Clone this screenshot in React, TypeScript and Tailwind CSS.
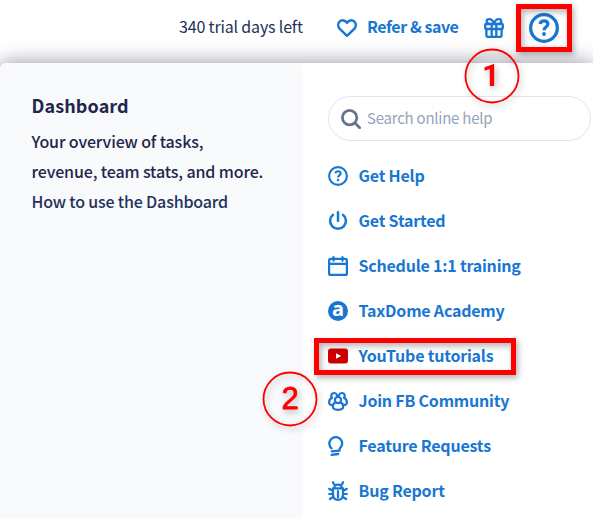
import React from "react";

const font = "font-['Noto_Sans_CJK_SC','Noto_Sans',sans-serif]";

function Svg({ children, size = 20, sw = 2.2 }: { children: React.ReactNode; size?: number; sw?: number }) {
  return (
    <svg className="shrink-0" width={size} height={size} viewBox="0 0 20 20" fill="none" stroke="currentColor" strokeWidth={sw} strokeLinecap="round" strokeLinejoin="round">
      {children}
    </svg>
  );
}

const Question = ({ size = 20, sw = 2.1 }: { size?: number; sw?: number }) => (
  <Svg size={size} sw={sw}>
    <circle cx="10" cy="10" r="8.9" />
    <path d="M7.4 7.4C7.6 6 8.6 5.3 10.1 5.3c1.5 0 2.5.9 2.5 2.1 0 1.9-2.6 2-2.6 4.1" strokeLinecap="butt" />
    <circle cx="10" cy="14" r="1.3" fill="currentColor" stroke="none" />
  </Svg>
);

const Heart = () => (
  <Svg sw={2.5}>
    <path d="M10 17.8 2.8 10.8C.8 8.7.7 5.6 2.6 3.7 4.7 1.6 8 2 10 4.7c2-2.7 5.3-3.1 7.4-1 1.9 1.9 1.8 5-.2 7.1Z" />
  </Svg>
);

const Gift = () => (
  <Svg sw={2.3}>
    <rect x="1.2" y="6" width="17.6" height="5" rx="1" />
    <path d="M2.4 11v6.2c0 .9.6 1.6 1.5 1.6h12.2c.9 0 1.5-.7 1.5-1.6V11M7.7 6v12.8M12.3 6v12.8M10 5.4C8.8 2.5 7.2 1.2 5.4 1.2S2.7 2.1 2.7 3.3c0 1.5 1 2.6 2.6 2.6M10 5.4c1.2-2.9 2.8-4.2 4.6-4.2s2.7.9 2.7 2.1c0 1.5-1 2.6-2.6 2.6" />
  </Svg>
);

const Power = () => (
  <Svg sw={2.5}>
    <path d="M10 1.2v8.6M4.9 3.9a7.9 7.9 0 1 0 10.2 0" />
  </Svg>
);

const Calendar = () => (
  <Svg sw={2.2}>
    <rect x="1.1" y="2.9" width="17.8" height="16" rx="1.5" />
    <path d="M1 7.8h18M5.5 1.1v3.6M14.5 1.1v3.6" />
  </Svg>
);

const Academy = () => (
  <span className="flex size-5 shrink-0 items-center justify-center rounded-full bg-[#1976d2] font-['Noto_Sans',sans-serif] text-[20px] leading-none font-bold text-white">
    <span className="-mt-[4px]">a</span>
  </span>
);

const YouTube = () => (
  <svg className="shrink-0" width="20" height="20" viewBox="0 0 20 20">
    <rect y="2.5" width="20" height="15" rx="3" fill="#cc0000" />
    <path d="m8 7.2 5.2 2.8L8 12.8Z" fill="#fff" />
  </svg>
);

const Community = () => (
  <Svg sw={2.2}>
    <circle cx="10" cy="9" r="3.1" />
    <path d="M7.3 11.4c-1.5.7-2.5 2.3-2.5 4.1 0 4.4 10.4 4.4 10.4 0 0-1.8-1-3.4-2.5-4.1" />
    <path d="M9 4.6A2.9 2.9 0 1 0 3.9 6.8M11 4.6a2.9 2.9 0 1 1 5.1 2.2" />
    <path d="M3.9 6.8C2.1 7.7 1.1 9.4 1.1 11.4c0 2 1.5 2.9 3.9 2.5M16.1 6.8c1.8.9 2.8 2.6 2.8 4.6 0 2-1.5 2.9-3.9 2.5" />
  </Svg>
);

const Bulb = () => (
  <Svg sw={2.3}>
    <path d="M3.5 12.3A6.4 6.4 0 1 1 11.6 12.6V14.6L3.8 15.4M3.6 18.8l6.6-.8" />
  </Svg>
);

const Bug = () => (
  <Svg sw={2.2}>
    <path d="M6.2 6.8C6.2 4.5 7.5 3.6 10 3.6s3.8.9 3.8 3.2M5 1.2l.8 1.8 1.2 1M15 1.2l-.8 1.8-1.2 1M5 7.4h10v5.8c0 3.5-1.8 5.6-5 5.6s-5-2.1-5-5.6ZM10 10v6.5M5 10 1.2 7.8M15 10l3.8-2.2M5 13H1.2M15 13h3.8M5.5 15.7 1.9 18M14.5 15.7l3.6 2.3" />
  </Svg>
);

const links = [
  { label: "Get Help", icon: <Question /> },
  { label: "Get Started", icon: <Power /> },
  { label: "Schedule 1:1 training", icon: <Calendar /> },
  { label: "TaxDome Academy", icon: <Academy /> },
  { label: "YouTube tutorials", icon: <YouTube /> },
  { label: "Join FB Community", icon: <Community /> },
  { label: "Feature Requests", icon: <Bulb /> },
  { label: "Bug Report", icon: <Bug /> },
];

export default function App() {
  return (
    <div className={`relative flex h-[519px] w-[593px] flex-col overflow-hidden bg-white whitespace-nowrap ${font}`}>
      <header className="flex h-[63px] shrink-0 items-start pt-[13px] pl-[179px] text-[#1976d2]">
        <span className="-mt-px w-[158px] text-[16px] leading-7 tracking-[-0.17px] text-[#24315a]">340 trial days left</span>
        <div className="flex h-7 items-center">
          <span className="mt-px"><Heart /></span>
          <span className="mb-0.5 ml-[10px] w-[117px] text-[16px] leading-7 font-bold tracking-[-0.45px]">Refer &amp; save</span>
          <span className="mt-0.5"><Gift /></span>
          <span className="mt-0.5 ml-[25px]"><Question size={30} sw={2.2} /></span>
        </div>
      </header>

      <main className="flex flex-1 rounded-tl-md bg-white shadow-[0_0_20px_rgba(35,35,65,0.5)]">
        <aside className="w-[303px] rounded-t-md bg-[#f8fafc] pt-[27px] pl-[31.5px] text-[#24254d]">
          <h1 className="text-[18px] leading-[30px] font-bold tracking-[0.1px]">Dashboard</h1>
          <p className="mt-[6px] text-[16px] leading-[30px] font-medium tracking-[-0.13px]">
            Your overview of tasks,<br />revenue, team stats, and more.
          </p>
          <a className="block text-[16px] leading-[30px] font-medium tracking-[-0.17px] text-[#24315a]">How to use the Dashboard</a>
        </aside>
        <section className="pt-[33px] pl-[25px]">
          <div className="flex h-[45px] w-[263px] items-center rounded-full border border-[#dfe6ef] pl-3">
            <span className="text-[#64748b]">
              <Svg size={20} sw={2.7}><circle cx="8.6" cy="8.6" r="7.2" /><path d="m14 14 4.7 4.7" /></Svg>
            </span>
            <span className="mb-0.5 ml-[6px] text-[15px] leading-6 tracking-[-0.24px] text-[#94a3b8]">Search online help</span>
          </div>
          <nav className="mt-[12px] text-[#1976d2]">
            {links.map(({ label, icon }) => (
              <a key={label} className="flex h-[45px] items-center gap-[10.5px] text-[16px] leading-6 font-bold tracking-[-0.21px]">
                {icon}<span className="mb-0.5">{label}</span>
              </a>
            ))}
          </nav>
        </section>
      </main>

      <div className="absolute top-1 left-[516px] h-12 w-14 border-5 border-[#f00] shadow-[2px_3px_6px_rgba(0,0,0,0.3),inset_2px_3px_6px_rgba(0,0,0,0.3)]" />
      <div className="absolute top-[338px] left-[314px] h-[37px] w-[202px] border-5 border-[#f00] shadow-[2px_3px_6px_rgba(0,0,0,0.3),inset_2px_3px_6px_rgba(0,0,0,0.3)]" />
      <svg className="absolute top-[48px] left-[464px] drop-shadow-[2px_3px_3px_rgba(0,0,0,0.25)]" width="56" height="56">
        <circle cx="28" cy="28" r="26.5" fill="none" stroke="#f00" strokeWidth="1.8" />
        <text x="27" y="38" textAnchor="middle" className="fill-[#f00] font-['Roboto',sans-serif] text-[31px] font-bold">1</text>
      </svg>
      <svg className="absolute top-[371px] left-[262px] drop-shadow-[2px_3px_3px_rgba(0,0,0,0.25)]" width="56" height="56">
        <circle cx="28" cy="28" r="26.5" fill="none" stroke="#f00" strokeWidth="1.8" />
        <text x="28" y="38" textAnchor="middle" stroke="#f00" strokeWidth="0.9" className="fill-[#f00] font-['Liberation_Sans',sans-serif] text-[31px]">2</text>
      </svg>
    </div>
  );
}
